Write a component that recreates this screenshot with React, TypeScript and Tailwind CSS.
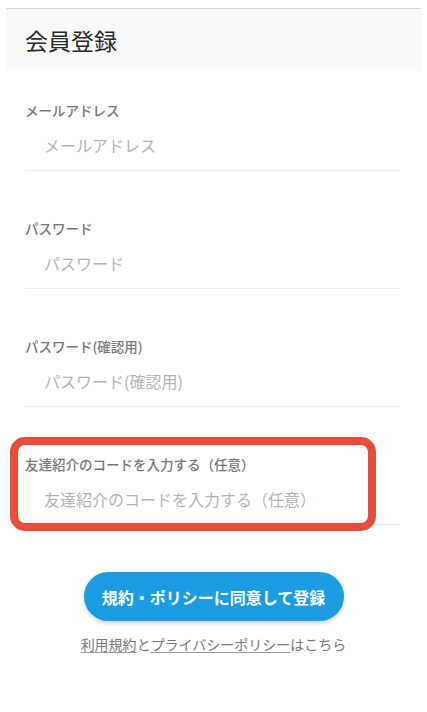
export default function App() {
  const fields = [
    { label: "メールアドレス", placeholder: "メールアドレス", type: "email" },
    { label: "パスワード", placeholder: "パスワード", type: "password" },
    { label: "パスワード(確認用)", placeholder: "パスワード(確認用)", type: "password" },
  ];

  return (
    <main
      className="min-h-[712px] bg-white pt-[8px]"
      style={{ fontFamily: '"Noto Sans CJK JP", "Noto Sans", sans-serif' }}
    >
      {/* ヘッダー */}
      <header className="mx-[6px] border-t border-[#d6d6d6] bg-[#f9f9f9] h-[63px] flex items-center pl-[19px]">
        <h1 className="text-[23px] text-[#2a2a2a] leading-none">会員登録</h1>
      </header>

      {/* フォーム */}
      <form className="pl-[25px] pr-[27px] pt-[30px] flex flex-col gap-[48px]">
        {fields.map((f) => (
          <Field key={f.label} {...f} />
        ))}
        <div className="relative">
          {/* 注目枠 */}
          <div className="absolute left-[-15px] top-[-18px] w-[366px] h-[94px] rounded-[15px] border-[8px] border-[#e84c3b] pointer-events-none" />
          <Field label="友達紹介のコードを入力する（任意）" placeholder="友達紹介のコードを入力する（任意）" type="text" />
        </div>
      </form>

      {/* ボタン */}
      <section className="flex flex-col items-center mt-[47px]">
        <button className="w-[260px] h-[49px] rounded-full bg-[#1b9ce2] text-white text-[16px] font-bold shadow-[0_2px_4px_rgba(0,0,0,0.2)]">
          規約・ポリシーに同意して登録
        </button>
        <p className="mt-[13px] text-[14px] text-[#777] leading-[20px]">
          <a className="underline underline-offset-2 decoration-[#999]">利用規約</a>と
          <a className="underline underline-offset-2 decoration-[#999]">プライバシーポリシー</a>はこちら
        </p>
      </section>
    </main>
  );
}

function Field({ label, placeholder, type }: { label: string; placeholder: string; type: string }) {
  return (
    <label className="block border-b border-[#ebebeb] pb-[13px]">
      <span className="block text-[13.5px] leading-[18px] font-medium text-[#777]">{label}</span>
      <input
        type={type}
        placeholder={placeholder}
        className="mt-[14px] block w-full h-[24px] pl-[19px] text-[16px] text-[#333] placeholder:text-[#b3b3b3] outline-none bg-transparent"
      />
    </label>
  );
}
